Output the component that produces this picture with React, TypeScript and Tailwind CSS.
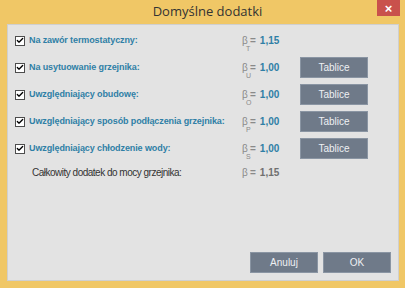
import { Check } from 'lucide-react'

type Row = {
  label: string
  sub: string
  value: string
  tables: boolean
}

const rows: Row[] = [
  { label: 'Na zawór termostatyczny:', sub: 'T', value: '1,15', tables: false },
  { label: 'Na usytuowanie grzejnika:', sub: 'U', value: '1,00', tables: true },
  { label: 'Uwzględniający obudowę:', sub: 'O', value: '1,00', tables: true },
  { label: 'Uwzględniający sposób podłączenia grzejnika:', sub: 'P', value: '1,00', tables: true },
  { label: 'Uwzględniający chłodzenie wody:', sub: 'S', value: '1,00', tables: true },
]

const font = { fontFamily: '"Liberation Sans", Arial, sans-serif' }

function Checkbox() {
  return (
    <span className="flex h-[10px] w-[10px] items-center justify-center border border-[#4d4d4d] bg-white">
      <Check className="h-[9px] w-[9px] text-black" strokeWidth={4} />
    </span>
  )
}

function GrayButton({ children }: { children: string }) {
  return (
    <button className="flex h-[21px] w-[68px] items-center justify-center border border-[#8a95a3] bg-[#6f7a89] text-[10px] text-[#eef0f3]">
      {children}
    </button>
  )
}

export default function App() {
  return (
    <div className="flex h-[288px] w-[405px] flex-col bg-[#f0c766] text-[10px]" style={font}>
      <div className="relative flex h-[24px] shrink-0 items-center justify-center">
        <span className="pl-[10px] text-[13px] text-[#333]" style={{ fontFamily: '"Open Sans", "Noto Sans", sans-serif' }}>Domyślne dodatki</span>
        <span className="absolute right-[5px] top-0 flex h-[16px] w-[23px] items-center justify-center bg-[#c9514c] text-[13px] font-bold leading-none text-white">×</span>
      </div>
      <div className="mb-[7px] ml-[7px] mr-[6px] flex flex-1 flex-col border border-[#cfcfcf] bg-[#e3e3e3] pb-[7px] pl-[7px] pr-[7px] pt-[5px]">
        <div className="flex flex-col gap-[6px]">
          {rows.map((row) => (
            <div key={row.label} className="flex h-[21px] items-center">
              <Checkbox />
              <span className="ml-[4px] w-[213px] whitespace-nowrap text-[9px] font-bold tracking-[-0.1px] text-[#2f7fa6]">{row.label}</span>
              <span className="flex w-[58px] items-center">
                <span className="relative w-[8px] text-[10px] leading-[12px] text-[#8a8a8a]">
                  β
                  <span className="absolute left-[4px] top-[10px] text-[7px] leading-[7px]">{row.sub}</span>
                </span>
                <span className="text-[10px] font-bold text-[#8a8a8a]">=</span>
                <span className="ml-[4px] font-bold text-[#2f7fa6]">{row.value}</span>
              </span>
              {row.tables && <GrayButton>Tablice</GrayButton>}
            </div>
          ))}
          <div className="flex h-[15px] items-center">
            <span className="ml-[17px] w-[210px] whitespace-nowrap text-[10px] tracking-[-0.5px] text-[#333]">Całkowity dodatek do mocy grzejnika:</span>
            <span className="flex items-center">
              <span className="w-[8px] text-[10px] text-[#8a8a8a]">β</span>
              <span className="font-bold text-[#8a8a8a]">=</span>
              <span className="ml-[4px] font-bold text-[#707070]">1,15</span>
            </span>
          </div>
        </div>
        <div className="mt-auto flex justify-end gap-[5px]">
          <GrayButton>Anuluj</GrayButton>
          <GrayButton>OK</GrayButton>
        </div>
      </div>
    </div>
  )
}
